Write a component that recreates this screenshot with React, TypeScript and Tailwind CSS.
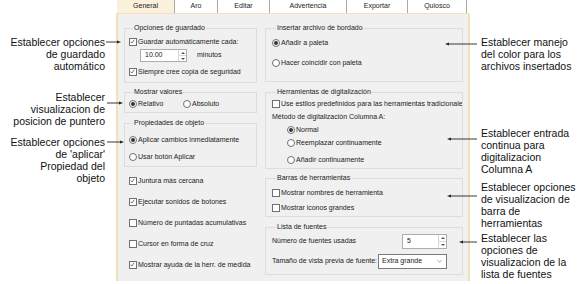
import React from "react";

const dlg = { fontFamily: '"Liberation Sans", Arial, sans-serif' };

function Check({ on }: { on?: boolean }) {
  return (
    <span className="relative w-[8px] h-[8px] shrink-0 border border-[#707070] bg-white">
      {on && (
        <svg viewBox="0 0 8 8" className="absolute left-0 top-0 w-[6px] h-[6px]">
          <path d="M0.8 3.6 L2.6 5.4 L5.6 1" stroke="#333" strokeWidth="0.9" fill="none" />
        </svg>
      )}
    </span>
  );
}

function Radio({ on }: { on?: boolean }) {
  return (
    <span className="w-[8px] h-[8px] shrink-0 rounded-full border border-[#707070] bg-white flex items-center justify-center">
      {on && <span className="w-[4px] h-[4px] rounded-full bg-[#333]" />}
    </span>
  );
}

function CheckRow({ on, label, className = "" }: { on?: boolean; label: string; className?: string }) {
  return (
    <div className={`flex items-center h-[12px] gap-[1px] whitespace-nowrap ${className}`}>
      <Check on={on} />
      <span>{label}</span>
    </div>
  );
}

function RadioRow({ on, label, className = "" }: { on?: boolean; label: string; className?: string }) {
  return (
    <div className={`flex items-center h-[12px] gap-[1px] whitespace-nowrap ${className}`}>
      <Radio on={on} />
      <span>{label}</span>
    </div>
  );
}

function Group({ title, className = "", children }: { title: string; className?: string; children: React.ReactNode }) {
  return (
    <fieldset className={`border border-[#dcdcdc] min-w-0 ${className}`}>
      <legend className="ml-[4px] px-[1px] h-[10px] leading-[10px] text-[#222]">{title}</legend>
      {children}
    </fieldset>
  );
}

function Spin({ value, w }: { value: string; w: string }) {
  return (
    <div className={`flex h-full bg-white border border-[#abadb3] ${w}`}>
      <span className="flex-1 pl-[4px] flex items-center">{value}</span>
      <span className="w-[8px] flex flex-col border-l border-[#d6d6d6]">
        <span className="flex-1 flex items-center justify-center border-b border-[#d6d6d6]">
          <svg viewBox="0 0 4 2" className="w-[4px] h-[2px]"><path d="M0 2 L2 0 L4 2Z" fill="#555" /></svg>
        </span>
        <span className="flex-1 flex items-center justify-center">
          <svg viewBox="0 0 4 2" className="w-[4px] h-[2px]"><path d="M0 0 L2 2 L4 0Z" fill="#555" /></svg>
        </span>
      </span>
    </div>
  );
}

const tabs = [
  { t: "General", w: "w-[58px]", sel: true },
  { t: "Aro", w: "w-[43px]" },
  { t: "Editar", w: "w-[52px]" },
  { t: "Advertencia", w: "w-[77px]" },
  { t: "Exportar", w: "w-[61px]" },
  { t: "Quiosco", w: "w-[59px]" },
];

function Ann({ lines, className = "" }: { lines: string[]; className?: string }) {
  return (
    <div className={`text-[10.5px] leading-[12px] text-[#111] ${className}`}>
      {lines.map((l) => (
        <div key={l} className="whitespace-nowrap">{l}</div>
      ))}
    </div>
  );
}

function Arrow({ x1, x2, y }: { x1: number; x2: number; y: number }) {
  const dir = x2 > x1 ? 1 : -1;
  return (
    <g>
      <line x1={x1} y1={y} x2={x2 - dir * 3} y2={y} stroke="#222" strokeWidth="0.9" />
      <path d={`M${x2} ${y} L${x2 - dir * 4} ${y - 1.6} L${x2 - dir * 4} ${y + 1.6}Z`} fill="#222" />
    </g>
  );
}

export default function App() {
  return (
    <div className="relative w-[581px] h-[284px] bg-white flex overflow-hidden" style={dlg}>
      {/* left annotations */}
      <div className="w-[116px] shrink-0 flex flex-col items-end pr-[11px] text-right">
        <Ann className="mt-[36px]" lines={["Establecer opciones", "de guardado", "automático"]} />
        <Ann className="mt-[19px]" lines={["Establecer", "visualizacion de", "posicion de puntero"]} />
        <Ann className="mt-[9px] leading-[11.7px]" lines={["Establecer opciones", "de 'aplicar'", "Propiedad del", "objeto"]} />
      </div>

      {/* dialog */}
      <div className="w-[354px] shrink-0 flex flex-col text-[7px] text-[#222]">
        <div className="h-[13px] flex pl-[1px]">
          {tabs.map((tb) => (
            <div
              key={tb.t}
              className={`${tb.w} h-full flex items-center justify-center border-r border-[#a8a8a8] ${tb.sel ? "bg-[#fbf0db]" : "bg-white"}`}
            >
              {tb.t}
            </div>
          ))}
        </div>
        <div className="h-[268px] bg-[#f0f0f0] border-l-2 border-r-2 border-t border-[#f4e1b8] flex gap-[8px] pl-[6px] pr-[5px]">
          {/* left column */}
          <div className="w-[133px] flex flex-col">
            <Group title="Opciones de guardado" className="mt-[9px] pl-[4px] pb-[4px]">
              <CheckRow on label="Guardar automáticamente cada:" className="mt-[3px]" />
              <div className="flex items-center h-[13px] mt-[1px] ml-[11px]">
                <Spin value="10.00" w="w-[47px]" />
                <span className="ml-[10px]">minutos</span>
              </div>
              <CheckRow on label="Siempre cree copia de seguridad" className="mt-[4px]" />
            </Group>
            <Group title="Mostrar valores" className="mt-[4px] pl-[4px] pb-[2px]">
              <div className="flex mt-[1px]">
                <RadioRow on label="Relativo" className="w-[54px]" />
                <RadioRow label="Absoluto" />
              </div>
            </Group>
            <Group title="Propiedades de objeto" className="mt-[5px] pl-[4px] pb-[3px]">
              <RadioRow on label="Aplicar cambios inmediatamente" className="mt-[6px]" />
              <RadioRow label="Usar botón Aplicar" className="mt-[5px]" />
            </Group>
            <div className="flex flex-col gap-[9px] mt-[8px] pl-[5px]">
              <CheckRow on label="Juntura más cercana" />
              <CheckRow on label="Ejecutar sonidos de botones" />
              <CheckRow label="Número de puntadas acumulativas" />
              <CheckRow label="Cursor en forma de cruz" />
              <CheckRow on label="Mostrar ayuda de la herr. de medida" />
            </div>
          </div>

          {/* right column */}
          <div className="w-[198px] flex flex-col">
            <Group title="Insertar archivo de bordado" className="mt-[9px] pl-[6px] pb-[12px]">
              <RadioRow on label="Añadir a paleta" className="mt-[4px]" />
              <RadioRow label="Hacer coincidir con paleta" className="mt-[8px]" />
            </Group>
            <Group title="Herramientas de digitalización" className="mt-[5px] pl-[6px] pb-[2px] overflow-hidden">
              <CheckRow label="Use estilos predefinidos para las herramientas tradicionales" className="mt-[1px]" />
              <div className="h-[12px] mt-[1px] flex items-center whitespace-nowrap">Método de digitalización Columna A:</div>
              <RadioRow on label="Normal" className="mt-[1px] ml-[15px]" />
              <RadioRow label="Reemplazar continuamente" className="mt-[1px] ml-[15px]" />
              <RadioRow label="Añadir continuamente" className="mt-[5px] ml-[15px]" />
            </Group>
            <Group title="Barras de herramientas" className="mt-[4px] pl-[6px] pb-[2px]">
              <CheckRow label="Mostrar nombres de herramienta" className="mt-[4px]" />
              <CheckRow label="Mostrar iconos grandes" className="mt-[3px]" />
            </Group>
            <Group title="Lista de fuentes" className="mt-[5px] pl-[6px] pb-[5px] pr-[15px]">
              <div className="flex items-center h-[15px] mt-[2px]">
                <span>Número de fuentes usadas</span>
                <div className="ml-auto h-[15px]">
                  <Spin value="5" w="w-[45px]" />
                </div>
              </div>
              <div className="flex items-center h-[15px] mt-[5px] whitespace-nowrap">
                <span>Tamaño de vista previa de fuente:</span>
                <div className="ml-[1px] w-[75px] h-[15px] bg-white border border-[#7a7a7a] flex items-center pl-[3px] pr-[4px]">
                  <span className="flex-1">Extra grande</span>
                  <svg viewBox="0 0 6 4" className="w-[5px] h-[3px]"><path d="M0.5 0.5 L3 3 L5.5 0.5" stroke="#555" strokeWidth="0.8" fill="none" /></svg>
                </div>
              </div>
            </Group>
          </div>
        </div>
      </div>

      {/* right annotations */}
      <div className="flex-1 flex flex-col pl-[11px]">
        <Ann className="mt-[36px]" lines={["Establecer manejo", "del color para los", "archivos insertados"]} />
        <Ann className="mt-[55px]" lines={["Establecer entrada", "continua para", "digitalizacion", "Columna A"]} />
        <Ann className="mt-[6px]" lines={["Establecer opciones", "de visualizacion de", "barra de", "herramientas"]} />
        <Ann className="mt-[3px]" lines={["Establecer las", "opciones de", "visualizacion de la", "lista de fuentes"]} />
      </div>

      {/* callout arrows */}
      <svg className="absolute left-0 top-0 w-[581px] h-[284px] pointer-events-none" viewBox="0 0 581 284">
        <Arrow x1={106} x2={121} y={42} />
        <Arrow x1={107} x2={123} y={103} />
        <Arrow x1={107} x2={124} y={142} />
        <Arrow x1={477} x2={445} y={44} />
        <Arrow x1={477} x2={447} y={139} />
        <Arrow x1={477} x2={447} y={196} />
        <Arrow x1={477} x2={459} y={242} />
      </svg>
    </div>
  );
}
